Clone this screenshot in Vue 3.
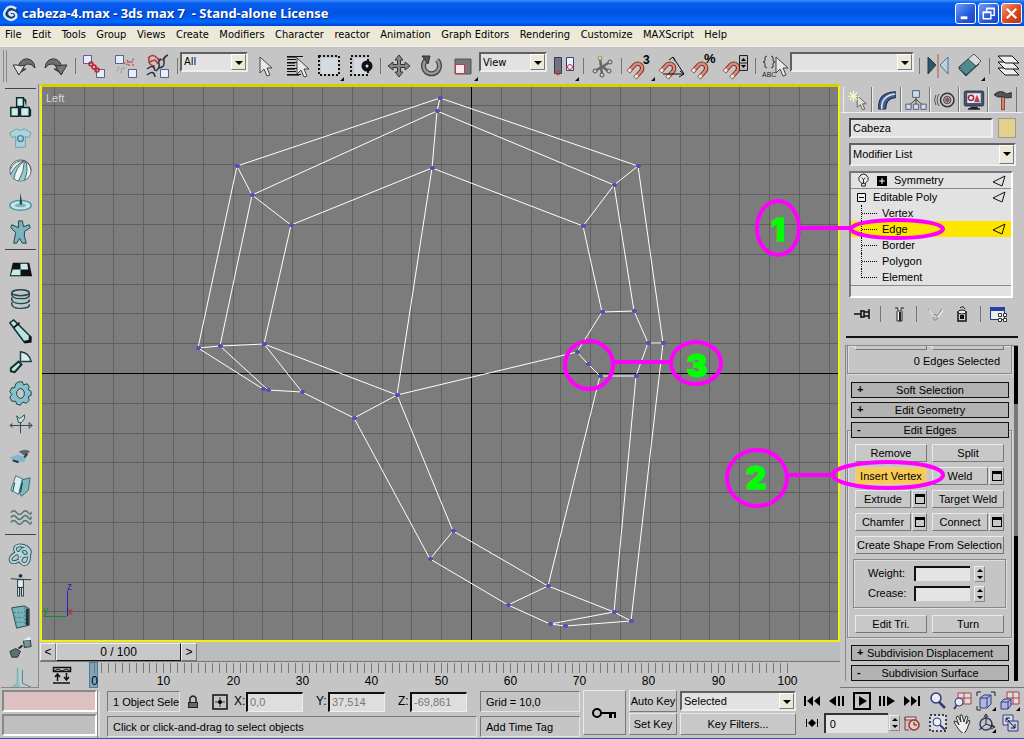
<script setup>
import { ref } from 'vue'

const menus = ['File', 'Edit', 'Tools', 'Group', 'Views', 'Create', 'Modifiers', 'Character', 'reactor', 'Animation', 'Graph Editors', 'Rendering', 'Customize', 'MAXScript', 'Help']

const magnet = '<g transform="rotate(42 13 19)"><path d="M8.500 27v-9a4.500 4.500 0 0 1 9 0v9" fill="none" stroke="#7d3a30" stroke-width="4.500"/><path d="M8.500 26.500V18a4.500 4.500 0 0 1 9 0v8.500" fill="none" stroke="#e08a7c" stroke-width="2.500"/><path d="M7 25h3M16 25h3" stroke="#eee" stroke-width="3"/></g>'
const corner = '<path d="M31 27v4h-4z" fill="#111"/>'
const cursor = 'M0 0v16l4-4 3 7 3-1-3-7h5z'

const art = {
  undo: '<path d="M10 24C9 13 14 8 20 9q6 1 7 9q-4-5-8-4-4 1-4 5l3 0z" fill="#6e6e6e" stroke="#333"/><path d="M5 15l6 10 6-10-4 1-4-1z" fill="#ddd" stroke="#333"/>',
  redo: '<g transform="translate(32 0) scale(-1 1)"><path d="M10 24C9 13 14 8 20 9q6 1 7 9q-4-5-8-4-4 1-4 5l3 0z" fill="#6e6e6e" stroke="#333"/><path d="M5 15l6 10 6-10-4 1-4-1z" fill="#777" stroke="#333"/></g>',
  link: '<g fill="#e9edf8" stroke="#59618c"><path d="M5.500 5.500h8v8h-8zM18.500 19.500h8v8h-8z"/></g><g fill="none" stroke="#c0202c" stroke-width="1.500"><circle cx="13" cy="14" r="2"/><circle cx="16" cy="17" r="2"/><circle cx="19" cy="20" r="2"/></g>',
  unlink: '<g fill="#e9edf8" stroke="#59618c"><path d="M5.500 5.500h8v8h-8zM18.500 19.500h8v8h-8z"/></g><g stroke="#cc5a60" stroke-width="1.500" stroke-dasharray="2 2"><path d="M14 14l4-4M17 12h8M16 15l9-7M18 15h7"/></g><path d="M9 17l-2 4M12 18l-1 5M14 17v3" stroke="#888" stroke-dasharray="2 1"/>',
  bind: '<g fill="none" stroke-width="1.500"><path d="M6 8q5-5 9 0t9-2M7 13q6-6 9 1M8 6q-4 9 5 10" stroke="#bd3039"/><path d="M26 5q-5 2-4 7t-5 6M5 19q7-6 8 2M5 25q7-6 8 2M19 9q-3 1-2 5t-3 7" stroke="#25334e"/></g><path d="M18.500 19.500h8v8h-8z" fill="#e9edf8" stroke="#59618c"/>',
  arrow: `<path transform="translate(11 7)" d="${cursor}" fill="#e8e8e8" stroke="#444"/>`,
  byname: `<path d="M6 6.500h16M6 9.500h9M6 12.500h12M6 15.500h8M6 18.500h12M6 21.500h9M6 24.500h14" stroke="#111" stroke-width="1"/><path d="M6 7.500h10M6 13.500h8M6 19.500h8M6 25.500h12" stroke="#555"/><path transform="translate(16 8)" d="${cursor}" fill="#e8e8e8" stroke="#444"/>`,
  rect: '<path d="M8 8h17v16H8z" fill="#d5d9e0"/><path d="M6 6h20v19H6z" fill="none" stroke="#111" stroke-width="2" stroke-dasharray="2 2"/>' + corner,
  window: '<path d="M9 8h13v16H9z" fill="#d5d9e4"/><path d="M6 6h17v19H6z" fill="none" stroke="#111" stroke-width="2" stroke-dasharray="2 2"/><circle cx="22" cy="16" r="5.500" fill="#111"/><circle cx="22" cy="16" r="1.500" fill="#ddd"/>',
  move: '<path d="M16 5l4 5h-2.500v4.500h4.500V12l5 4-5 4v-2.500h-4.500V22H20l-4 5-4-5h2.500v-4.500H10V20l-5-4 5-4v2.500h4.500V10H12z" fill="#888" stroke="#333"/>',
  rotate: '<path d="M11 10a8 8 0 1 0 11 0" fill="none" stroke="#444" stroke-width="5"/><path d="M11 10a8 8 0 1 0 11 0" fill="none" stroke="#999" stroke-width="2.500"/><path d="M7 6h8l-2 8z" fill="#555" stroke="#333"/>',
  scale: '<path d="M8 9h16v15H8z" fill="#777" stroke="#555"/><path d="M8.500 14.500h9v9h-9z" fill="#f3e9ec" stroke="#bd3b48"/>' + corner,
  pivot: '<path d="M6.500 7.500h7v16h-7z" fill="#71747c" stroke="#333b55"/><path d="M18.500 7.500h7v13h-7z" fill="#edf0ff" stroke="#3b437d"/><g fill="none" stroke="#d0353b"><circle cx="10" cy="23" r="2"/><circle cx="22" cy="17" r="2.500"/></g>' + corner,
  manip: '<path d="M14 8l2 17M9 21l15-9M16 16l6 5" stroke="#666" stroke-width="2.500"/><g fill="#ccc" stroke="#555"><circle cx="9" cy="21" r="2"/><circle cx="16" cy="25" r="2"/><circle cx="24" cy="12" r="2"/><circle cx="23" cy="21" r="2"/></g><circle cx="14" cy="8" r="2" fill="#eeea55" stroke="#888"/>',
  snap3: magnet + '<text x="19" y="14" font-size="12" font-weight="bold">3</text>' + corner,
  angle: magnet + '<path d="M17 7l11 17H7M17 7l-4 3M17 7l2 4M28 24l-4-3M28 24l-5 3" fill="none" stroke="#111"/>',
  percent: magnet + '<text x="16" y="13" font-size="13" font-weight="bold">%</text>',
  spin: magnet + '<path d="M19.500 5.500h8v15h-8zM19.500 13h8" fill="#bbb" stroke="#222"/><path d="M21 11l2.500-3 2.500 3zM21 15l2.500 3 2.500-3z"/>',
  named: `<g fill="none" stroke="#333"><path d="M9 6q-3 0-2 4 0 2-2 2 2 0 2 2-1 4 2 4M13 6q3 0 2 4 0 2 2 2-2 0-2 2 1 4-2 4"/></g><text x="4" y="27" font-size="7" fill="#222">ABC</text><path transform="translate(18 7)" d="${cursor}" fill="#e8e8e8" stroke="#444"/>`,
  mirror: '<path d="M6 7l8 8-8 9z" fill="#2d5964" stroke="#253d45"/><path d="M26 7l-8 8 8 9z" fill="#bdd0dd" stroke="#587080"/><path d="M16 4v24" stroke="#bd4d55"/>',
  align: '<path d="M5 17l9-8 8 7-10 9z" fill="#4d8b8e" stroke="#203f42"/><path d="M14 9l6-5 7 7-5 5z" fill="#d6dce3" stroke="#555"/><path d="M5 17v2l7 7v-2M12 26l13-12" fill="none" stroke="#26464b"/>' + corner,
  layers: '<g fill="#eee" stroke="#111"><path d="M6 18h14l7 7H13z"/><path d="M6 12h14l7 7H13z"/><path d="M6 6h14l7 7H13z"/></g>',

  cubes: '<g fill="#c7eef0" stroke="#142427" stroke-width="1.500"><path d="M12 5h7v9h-7zM6 15h8v9H6zM16 15h9v9h-9z"/></g><path d="M19 5l3 2v7M25 15l2 2v7h-2M14 15l2 1v8h-2" fill="#142427"/>',
  shirt: '<path d="M5 9l7-4q4 3 8 0l7 4-2 5-4-1v11H11V13l-4 1z" fill="#a9d4dd" stroke="#6ba0ae"/><circle cx="16" cy="15" r="3" fill="none" stroke="#4a8597" stroke-width="1.500"/>',
  ball: '<circle cx="16" cy="16" r="11" fill="#eef4f4" stroke="#5b6567"/><path d="M20 6Q10 10 6 20q0 2 3 5 2-12 11-19zM20 6q0 10-6 21l6-1q4-9 2-19z" fill="#8ecdd0"/><path d="M20 6Q10 5 5.500 15M20 6Q10 10 6 20M20 6q-9 7-11 19M20 6q0 10-6 21M21 6q4 9-1 20M21 6q6 5 6 10" fill="none" stroke="#4d6365"/>',
  drip: '<ellipse cx="16" cy="20" rx="11" ry="5" fill="#c5e7e9" stroke="#4f9aa0" stroke-width="1.500"/><ellipse cx="16" cy="20" rx="6" ry="2" fill="#7eb6ba"/><path d="M16 7l2 12h-3z" fill="#1d4b52"/>',
  man: '<path d="M14 4h4l1 6 6-2 1 3-6 4v5l2 7h-4l-3-5-3 5H9l2-11-5-5 1-3 7 3z" fill="#78b5be" stroke="#203f46"/>',
  checker: '<path d="M8 9h17l3 14H5z" fill="#111"/><path d="M16 10h7l1 6h-8zM8 16h8v6H6z" fill="#c4eded"/>',
  coil: '<g fill="none" stroke="#29454a" stroke-width="1.500"><ellipse cx="16" cy="8" rx="9" ry="3"/><path d="M7 8q-1 6 9 6t9-4M7 13q-1 6 9 6t9-4M7 18q-1 6 9 6t9-4M25 8v3q-1 3-7 3M25 15q0 4-7 4"/></g><path d="M9 12q6 2 14 0M9 17q6 2 14 0M9 22q6 2 14 0" stroke="#8ad0d3" fill="none"/>',
  tube: '<path d="M5 7l4-3 17 17-1 5-5 1z" fill="#b6e4e5" stroke="#142b2d" stroke-width="1.500"/><path d="M9 12l6-5" stroke="#111" stroke-width="2"/><path d="M20 27l6-1v-5" fill="none" stroke="#111" stroke-width="3"/>',
  hinge: '<path d="M6 22l8-7 3 3-7 8-4-1z" fill="#b6e4e5" stroke="#142b2d" stroke-width="2"/><path d="M16 15V5q9 1 11 10z" fill="#d6eeee" stroke="#243c40" stroke-width="1.500"/>',
  gear: '<path d="M14 4h4l1 3 4-1 2 3-1 3 3 2v4l-3 1 1 4-3 3-4-1-2 3-4-1-1-3-4 0-2-4 2-3-2-3 2-4 3 0 1-4z" fill="#85c1c9" stroke="#213c45"/><ellipse cx="16" cy="16" rx="4" ry="5" fill="#c6c6c6" stroke="#213c45"/>',
  vane: '<path d="M5 17h23M16 12v13M8 15l-3 2 3 2M25 14v6l3-3z" fill="none" stroke="#35474a"/><path d="M12 7l3 3 5-4v4l-3 4h-3z" fill="#cbe4e6" stroke="#35474a"/>',
  car: '<path d="M5 18l8-3 9 3-2 5-11-1z" fill="#83b8cc"/><path d="M14 12q7-4 12 0l-6 4z" fill="#5d676a"/><path d="M8 21l6 2M23 14l-3 4" stroke="#24353b" stroke-width="2"/>',
  book: '<path d="M11 5l7 3-4 16-8-4z" fill="#d1f1f2" stroke="#4a7478"/><path d="M18 9l8-2-2 13-7 6-2-3z" fill="#7fb8be" stroke="#3c686d"/><path d="M10 12l-2 9M18 12l-2 10" stroke="#152f33"/>',
  waves: '<g fill="none" stroke="#507276" stroke-width="1.500"><path d="M6 11q3-4 6 0t6 0 6 0 3-1M6 16q3-4 6 0t6 0 6 0 3-1M6 21q3-4 6 0t6 0 6 0 3-1"/></g>',
  knot: '<g fill="none" stroke="#375b63" stroke-width="4"><ellipse cx="18" cy="12" rx="8" ry="5" transform="rotate(20 18 12)"/><ellipse cx="12" cy="19" rx="7" ry="4" transform="rotate(-30 12 19)"/><ellipse cx="20" cy="18" rx="5" ry="8"/></g><g fill="none" stroke="#b5dadd" stroke-width="2"><ellipse cx="18" cy="12" rx="8" ry="5" transform="rotate(20 18 12)"/><ellipse cx="12" cy="19" rx="7" ry="4" transform="rotate(-30 12 19)"/><ellipse cx="20" cy="18" rx="5" ry="8"/></g>',
  figure: '<path d="M6 9q10 1 21 1M13 10h6v8h-6zM13 18h2v9h-2zM17 18h2v9h-2z" fill="#e4f0f0" stroke="#263a3d"/><circle cx="16" cy="6" r="2" fill="#263a3d"/>',
  cloth: '<path d="M7 7l13-2 5 3v17l-13 3z" fill="#78b2ba" stroke="#2d4d54"/><path d="M20 6l1 18M9 12h9M10 17h9M11 22h9" stroke="#456f77" stroke-dasharray="2 2"/><path d="M23 8v17" stroke="#1f3439" stroke-width="3"/>',
  dice: '<path d="M5 20l6-3 5 3-3 6-6 0z" fill="#617073" stroke="#2a3537"/><path d="M19 9l7-1 1 7-7 1z" fill="#74979a" stroke="#2a3537"/><path d="M14 17l4-3" stroke="#222" stroke-width="2"/><path d="M18 9l7-4 2 3z" fill="#e1f3f4"/>',
  pipe: '<path d="M13 5v16l-6 5M16 22l-7 5h14" fill="none" stroke="#83b7be" stroke-width="2"/><path d="M16 8v14l8 3" fill="none" stroke="#a9d4da" stroke-width="2"/><path d="M18 7v14l9 4" fill="none" stroke="#67777a"/>',

  create: `<path transform="translate(15 10)" d="${cursor}" fill="#e1e1d4" stroke="#444"/><path d="M10 4v15M2 11h16M5 6l10 10M15 6L5 16" stroke="#fff8c8" stroke-width="1.500"/>`,
  modify: '<path d="M5 28Q3 6 27 5v8Q15 13 14 28z" fill="#46618f" stroke="#1c2c50" stroke-width="1.500"/><path d="M9 28Q8 10 27 8" stroke="#dce6f2" stroke-width="2" fill="none"/>',
  hierarchy: '<path d="M16 12v11M16 15L7 23M16 15l9 8" stroke="#222"/><g fill="#d2daed" stroke="#333f58"><path d="M11.500 3.500h9v9h-9zM2.500 21.500h7v7h-7zM12.500 21.500h7v7h-7zM22.500 21.500h7v7h-7z"/></g>',
  motion: '<g fill="none" stroke="#333"><circle cx="19" cy="16" r="9" stroke-width="2"/><circle cx="19" cy="16" r="5"/><path d="M19 11v10M14 16h10M15 12l8 8M23 12l-8 8M8 8q-5 8 0 16M4 9q-4 7 0 14"/></g><circle cx="19" cy="16" r="2" fill="#b34"/>',
  display: '<rect x="3" y="4" width="26" height="20" rx="2" fill="#46546e" stroke="#17223b"/><path d="M7 7h18v13H7z" fill="#e6ecf5"/><circle cx="12" cy="13" r="3.500" fill="none" stroke="#b22539" stroke-width="2"/><path d="M16 19l4-10 4 10z" fill="#c43c51"/><path d="M11 26h10M8 28h16" stroke="#222" stroke-width="2"/>',
  utility: '<path d="M4 9q8-8 17-1l6-2v7h-8l-2-1H9z" fill="#555" stroke="#111"/><path d="M14 12h4v17h-4z" fill="#d98366" stroke="#6b3226"/>',

  pin: '<path d="M1 10h7M8 6v8M8 7h3v6H8M11 8h5v4h-5M16 5v10" fill="none" stroke="#111" stroke-width="1.500"/>',
  tubeEnd: '<path d="M6 4h3v3h3V4h3M8 7v10h5V7" fill="#eee" stroke="#222"/><path d="M11 8v9" stroke="#222" stroke-width="2"/>',
  unique: '<path d="M3 5l5 7 2-2 2 2 5-7M8 13h1v3h2M12 13v3" fill="none" stroke="#888"/><path d="M4 6l5 7M18 6l-5 7" stroke="#fff"/>',
  trash: '<path d="M6 8h8v9H6z" fill="#ccc" stroke="#111" stroke-width="1.500"/><ellipse cx="10" cy="8" rx="4" ry="2" fill="#eee" stroke="#111"/><path d="M8 11h4v4H8z" fill="#111"/><path d="M8 4q3-3 5 1" stroke="#111" fill="none"/>',
  sets: '<path d="M2.500 3.500h14v12h-14z" fill="#eee" stroke="#24356f"/><path d="M2 3h15v4H2z" fill="#2840ad"/><path d="M10.500 9.500h3v3h-3zM15.500 9.500h3v3h-3zM10.500 14.500h3v3h-3zM15.500 14.500h3v3h-3z" fill="#fff" stroke="#333"/>',

  start: '<path d="M2 5h2v10H2zM11 5v10L5 10zM18 5v10l-6-5z"/>',
  prev: '<path d="M9 5v10l-7-5zM11 5h2v10h-2zM15 5h2v10h-2z"/>',
  play: '<path d="M2 2h16v16H2z" fill="none" stroke="#000" stroke-width="2"/><path d="M7 5v10l8-5z"/>',
  next: '<path d="M2 5h2v10H2zM6 5h2v10H6zM10 5v10l8-5z"/>',
  end: '<path d="M2 5v10l6-5zM9 5v10l6-5zM16 5h2v10h-2z"/>',
  keymode: '<path d="M4 6h1v8H4zM10 6v8l-4-4zM10 6v8l4-4zM15 6h1v8h-1z"/>',
  timecfg: '<path d="M3 4h11v3H3z" fill="#ddd" stroke="#8b3a35"/><path d="M3 4v13h4" fill="none" stroke="#8b3a35"/><circle cx="12" cy="12" r="5" fill="#e9cac4" stroke="#9c352f" stroke-width="1.500"/><path d="M12 9v3h3" fill="none" stroke="#222"/>',
  zoom: '<circle cx="8" cy="7" r="5" fill="#e8edf5" stroke="#333c70" stroke-width="1.500"/><path d="M11 11l6 6" stroke="#333c70" stroke-width="2.500"/>',
  zoomall: '<path d="M6 2h13v11H6zM12 2v11M6 7h13" fill="#ddd" stroke="#ad3c4a"/><circle cx="7" cy="11" r="4" fill="#e8edf5" stroke="#333c70"/><path d="M5 14l-3 4" stroke="#333c70" stroke-width="2"/>',
  extents: '<path d="M4 7l4-3h7v9l-4 4H4zM4 7h7v9M11 7l4-3" fill="#aeb7e0" stroke="#303a83"/><path d="M1 5V1h4M15 1h4v4M1 15v4h4" fill="none" stroke="#222"/><path d="M20 16v4h-4z"/>',
  extall: '<path d="M7 1h12v12H7zM13 1v12M7 7h12" fill="#ddd" stroke="#ad3c4a"/><path d="M1 11l3-3h7v6l-3 4H1zM1 11h7v7M8 11l3-3" fill="#aeb7e0" stroke="#303a83"/><path d="M20 16v4h-4z"/>',
  region: '<path d="M2 2h16v16H2z" fill="#d8dce5" stroke="#111" stroke-width="1.500" stroke-dasharray="2 2"/><circle cx="9" cy="9" r="4" fill="#edf1fa" stroke="#333c70"/><path d="M12 12l5 5" stroke="#333c70" stroke-width="2"/>',
  pan: '<path d="M8 18L3 11l-1-3 3 1 2 3L4 4l2-1 3 6-1-7h2l2 7 2-6 2 1-2 7 3-4 1 1-3 8-3 5z" fill="#f0eeee" stroke="#333"/>',
  arc: '<circle cx="10" cy="11" r="6" fill="none" stroke="#303a70" stroke-width="1.500"/><path d="M10 2v9l8 3M10 11l-7 6M8 4l2-3 2 3M15 11l4 3-4 2" fill="none" stroke="#222"/><path d="M20 16v4h-4z"/>',
  maxvp: '<path d="M3 2h10v10H3z" fill="#d9def4" stroke="#303a83"/><path d="M8 8h10v10H8z" fill="#c8cce0" stroke="#303a83"/><path d="M6 5l9 10M6 5v4M6 5h4M15 15v-4M15 15h-4" fill="none" stroke="#111"/>',
}

const toolbar = [
  ['i', 'undo', 'Undo'], ['i', 'redo', 'Redo'], ['s'],
  ['i', 'link', 'Link'], ['i', 'unlink', 'Unlink'], ['i', 'bind', 'Bind to Space Warp'], ['s'],
  ['d', 'All', 'filter'],
  ['i', 'arrow', 'Select'], ['i', 'byname', 'Select by Name'], ['i', 'rect', 'Rectangular Region'], ['i', 'window', 'Window/Crossing'], ['s'],
  ['i', 'move', 'Move'], ['i', 'rotate', 'Rotate'], ['i', 'scale', 'Scale'],
  ['d', 'View', 'coords'],
  ['i', 'pivot', 'Pivot'], ['s'], ['i', 'manip', 'Manipulate'], ['s'],
  ['i', 'snap3', '3D Snap'], ['i', 'angle', 'Angle Snap'], ['i', 'percent', 'Percent Snap'], ['i', 'spin', 'Spinner Snap'], ['s'],
  ['i', 'named', 'Named Sets'], ['d', '', 'sets'], ['s'],
  ['i', 'mirror', 'Mirror'], ['i', 'align', 'Align'], ['s'], ['i', 'layers', 'Layers'],
]

const side = [
  ['cubes', 'shirt', 'ball', 'drip', 'man'],
  ['checker', 'coil', 'tube', 'hinge', 'gear', 'vane', 'car', 'book', 'waves'],
  ['knot', 'figure', 'cloth', 'dice', 'pipe'],
]
const tabs = ['create', 'modify', 'hierarchy', 'motion', 'display', 'utility']
const stackTools = ['pin', '', 'tubeEnd', '', 'unique', 'trash', '', 'sets']
const subs = ['Vertex', 'Edge', 'Border', 'Polygon', 'Element']

const step = 29.8
const gridX = Array.from({ length: 27 }, (_, k) => Math.round(471 + (k - 14) * step) + 0.5).filter(x => x !== 471.5)
const gridY = Array.from({ length: 18 }, (_, k) => Math.round(373 + (k - 9) * step) + 0.5).filter(y => y !== 373.5)

const v = {
  A: [440, 98], B: [437, 111], C: [432, 168], D: [237, 166], E: [252, 195], F: [291, 225],
  G: [638, 166], H: [614, 185], I: [583, 226], J: [602, 312], K: [634, 311], L: [648, 343], M: [663, 343],
  N: [577, 352], O: [588, 364], P: [600, 376], Q: [636, 376], R: [198, 348], S: [220, 346], T: [264, 344],
  U: [263, 389], V: [268, 390], W: [302, 392], X: [354, 418], Y: [397, 395], Z: [453, 531],
  a: [430, 559], b: [508, 605], c: [548, 586], d: [614, 612], e: [631, 621], f: [550, 624], g: [565, 626],
}
const edges = 'AD AG AB BE BH BC CF CI DE EF GH HI DR ES FT RS ST RU SV TW UV VW WX XY TY CY YN YZ Za Xa ab Zc bc cd bf fg ge de fd IJ JK HK KL LM GM JN NO OP PQ LQ Pc Qd Me'
const mesh = edges.split(' ').map(([p, q]) => `M${v[p]}L${v[q]}`).join('')
const verts = Object.values(v)

const ticks = Array.from({ length: 101 }, (_, i) => ({ i, x: Math.round(94 + i * 6.93) + 0.5 }))
const axes = [['X:', '0,0'], ['Y:', '37,514'], ['Z:', '-69,861']]
const objectName = ref('Cabeza')
const frame = ref('0')
</script>

<template>
  <div class="app">
    <header class="title">
      <svg class="logo" viewBox="0 0 18 18"><circle cx="9" cy="9" r="8" fill="#153f7c"/><path d="M15 4Q8-1 4 5t1 9q6 4 10-1 1-5-4-6-4 0-3 3 2 2 4 0" fill="none" stroke="#dcecf4" stroke-width="2.500"/></svg>
      <h1>cabeza-4.max - 3ds max 7 &nbsp;- Stand-alone License</h1>
      <button class="win" aria-label="Minimize"><svg viewBox="0 0 20 20"><path d="M5 13h7v3H5z" fill="#fff"/></svg></button>
      <button class="win" aria-label="Restore"><svg viewBox="0 0 20 20"><path d="M8 8V4.500h8V12h-3M8 5h8M4.500 8.500h8v7h-8zM4 9h9" fill="none" stroke="#fff" stroke-width="1.500"/></svg></button>
      <button class="win close" aria-label="Close"><svg viewBox="0 0 20 20"><path d="M5 5l10 10M15 5L5 15" stroke="#fff" stroke-width="2.500"/></svg></button>
    </header>

    <nav class="menu"><div><a v-for="m in menus" :key="m" href="#">{{ m }}</a></div></nav>

    <div class="toolbar">
      <i class="grip"></i>
      <template v-for="(t, n) in toolbar" :key="n">
        <button v-if="t[0] === 'i'" class="tool" :aria-label="t[2]"><svg viewBox="0 0 32 32" v-html="art[t[1]]"></svg></button>
        <i v-else-if="t[0] === 's'" class="tsep"></i>
        <span v-else class="drop" :class="t[2]"><select :aria-label="t[2]"><option>{{ t[1] }}</option></select><b></b></span>
      </template>
    </div>

    <main class="main">
      <aside class="side">
        <div v-for="(g, n) in side" :key="n" class="sgroup">
          <button v-for="s in g" :key="s" class="stool" :aria-label="s"><svg viewBox="0 0 32 32" v-html="art[s]"></svg></button>
        </div>
      </aside>

      <section class="center">
        <div class="viewport">
          <svg viewBox="42 87 796 553" preserveAspectRatio="xMidYMid slice">
            <g stroke="#606060">
              <path v-for="x in gridX" :key="'x' + x" :d="`M${x} 0V739`" />
              <path v-for="y in gridY" :key="'y' + y" :d="`M0 ${y}H1024`" />
            </g>
            <path d="M471.500 0V739M0 373.500H1024" stroke="#000" />
            <path :d="mesh" fill="none" stroke="#fff" />
            <path v-for="(p, n) in verts" :key="n" :d="`M${p[0] - 1} ${p[1] - 2}h3v1h1v2h-1v1h-3v-1h-1v-2h1z`" fill="#5450b4" />
            <text x="46" y="102" fill="#d5d5d5" font-size="11">Left</text>
            <g fill="none"><path d="M67.500 591v25" stroke="#2222c0"/><path d="M44 616.500h23" stroke="#158a30"/></g>
            <g font-size="10"><text x="67" y="590" fill="#2222c0">z</text><text x="43" y="614" fill="#158a30">y</text><text x="68" y="615" fill="#c02030">x</text></g>
          </svg>
        </div>
        <div class="slider">
          <button class="step">&lt;</button><button class="thumb">0 / 100</button><button class="step">&gt;</button>
        </div>
        <div class="track">
          <svg viewBox="40 662 800 26" preserveAspectRatio="xMinYMin meet">
            <path d="M53.500 667.500h17v4h-17zM53 683h17M57.500 675v6M66.500 673v6M55 677l2.500-3 2.500 3M64 677l2.500 3 2.500-3" fill="none" stroke="#111" stroke-width="1.500"/>
            <path d="M54 671l4-2 4 2 4-2 4 2" fill="none" stroke="#111"/>
            <rect x="89.500" y="662.500" width="8" height="25" fill="#7fa3bd" stroke="#527994"/>
            <template v-for="t in ticks" :key="t.i">
              <path :d="`M${t.x} 663v10`" stroke="#787878"/>
              <text v-if="t.i % 10 === 0" :x="t.x" y="685" font-size="12" text-anchor="middle">{{ t.i }}</text>
            </template>
          </svg>
        </div>
      </section>

      <aside class="panel">
        <div class="tabs"><button v-for="t in tabs" :key="t" :aria-label="t"><svg viewBox="0 0 32 32" v-html="art[t]"></svg></button></div>
        <div class="name"><input v-model="objectName" aria-label="Object name"><button class="swatch" aria-label="Object color"></button></div>
        <span class="drop modlist"><select aria-label="Modifier List"><option>Modifier List</option></select><b></b></span>
        <div class="stack">
          <div class="row top">
            <svg class="bulb" viewBox="0 0 14 16"><path d="M5 11q-4-3-3-6 2-4 5-4t5 4q1 3-3 6zM5 11v3h4v-3M5 5l2 2 2-2M7 7v4" fill="#eee" stroke="#111"/></svg>
            <svg class="plus" viewBox="0 0 9 9"><path d="M0 0h9v9H0z"/><path d="M2 4.500h5M4.500 2v5" stroke="#fff"/></svg>
            <span>Symmetry</span><svg class="tri" viewBox="0 0 14 12"><path d="M1 7l12-6-3 10z" fill="none" stroke="#111"/></svg>
          </div>
          <div class="row poly">
            <svg class="plus" viewBox="0 0 9 9"><path d="M.5.500h8v8h-8zM2 4.500h5" fill="#eee" stroke="#000"/></svg>
            <span>Editable Poly</span><svg class="tri" viewBox="0 0 14 12"><path d="M1 7l12-6-3 10z" fill="none" stroke="#111"/></svg>
          </div>
          <div v-for="s in subs" :key="s" class="row sub" :class="{ sel: s === 'Edge' }">
            <i></i><span>{{ s }}</span><svg v-if="s === 'Edge'" class="tri" viewBox="0 0 14 12"><path d="M1 7l12-6-3 10z" fill="none" stroke="#111"/></svg>
          </div>
          <div class="rest"></div>
        </div>
        <div class="stools">
          <template v-for="(s, n) in stackTools" :key="n"><button v-if="s" :aria-label="s"><svg viewBox="0 0 20 20" v-html="art[s]"></svg></button><i v-else></i></template>
        </div>
        <hr>
        <div class="scroll">
          <div class="rolls">
            <div class="box first">
              <div class="pair"><button class="btn" aria-label="Ring"></button><button class="btn" aria-label="Loop"></button></div>
              <p>0 Edges Selected</p>
            </div>
            <button class="roll"><b>+</b>Soft Selection</button>
            <button class="roll"><b>+</b>Edit Geometry</button>
            <button class="roll"><b>-</b>Edit Edges</button>
            <div class="box edges">
              <div class="pair"><button class="btn">Remove</button><button class="btn">Split</button></div>
              <div class="pair"><button class="btn hot">Insert Vertex</button><span class="duo"><button class="btn">Weld</button><button class="btn set" aria-label="Weld settings"><i></i></button></span></div>
              <div class="pair"><span class="duo"><button class="btn">Extrude</button><button class="btn set" aria-label="Extrude settings"><i></i></button></span><button class="btn">Target Weld</button></div>
              <div class="pair"><span class="duo"><button class="btn">Chamfer</button><button class="btn set" aria-label="Chamfer settings"><i></i></button></span><span class="duo"><button class="btn">Connect</button><button class="btn set" aria-label="Connect settings"><i></i></button></span></div>
              <button class="btn">Create Shape From Selection</button>
              <div class="box inner">
                <label>Weight:<input><span class="spin"></span></label>
                <label>Crease:<input><span class="spin"></span></label>
              </div>
              <div class="pair"><button class="btn">Edit Tri.</button><button class="btn">Turn</button></div>
            </div>
            <button class="roll"><b>+</b>Subdivision Displacement</button>
            <button class="roll"><b>-</b>Subdivision Surface</button>
          </div>
          <div class="bar"><i></i></div>
        </div>
      </aside>
    </main>

    <footer class="status">
      <div class="listen"><input class="pink" aria-label="Macro recorder"><input aria-label="Script listener"></div>
      <div class="mid">
        <div class="coords">
          <span class="sunk objs">1 Object Sele</span>
          <button class="mini" aria-label="Lock"><svg viewBox="0 0 14 16"><path d="M4 8V4q3-4 6 0v4" fill="none" stroke="#222" stroke-width="1.500"/><path d="M2 8h10v6H2z" fill="#222"/><path d="M3 10h8M3 12h8" stroke="#aaa"/></svg></button>
          <button class="mini abs" aria-label="Absolute mode"><svg viewBox="0 0 16 16"><path d="M1 1h14v14H1z" fill="none" stroke="#111" stroke-width="1.500"/><path d="M8 3v10M3 8h10" stroke="#333"/><circle cx="8" cy="8" r="2"/></svg></button>
          <label v-for="a in axes" :key="a[0]">{{ a[0] }}<input :value="a[1]"></label>
        </div>
        <div class="sunk">Click or click-and-drag to select objects</div>
      </div>
      <div class="tags"><div class="sunk">Grid = 10,0</div><div class="sunk">Add Time Tag</div></div>
      <button class="btn key" aria-label="Set keys"><svg viewBox="0 0 28 14"><circle cx="6" cy="7" r="4" fill="none" stroke="#000" stroke-width="2"/><path d="M10 6h15v6h-2V8h-2v4h-3V8h-8z"/></svg></button>
      <div class="keys"><button class="btn">Auto Key</button><button class="btn">Set Key</button></div>
      <div class="filters"><span class="drop"><select aria-label="Key set"><option>Selected</option></select><b></b></span><button class="btn">Key Filters...</button></div>
      <div class="play">
        <div><button v-for="p in ['start', 'prev', 'play', 'next', 'end']" :key="p" :aria-label="p"><svg viewBox="0 0 20 20" v-html="art[p]"></svg></button></div>
        <div><button aria-label="Key mode"><svg viewBox="0 0 20 20" v-html="art.keymode"></svg></button><input v-model="frame" aria-label="Current frame"><span class="spin"></span><button aria-label="Time configuration"><svg viewBox="0 0 20 20" v-html="art.timecfg"></svg></button></div>
      </div>
      <div class="views"><button v-for="p in ['zoom', 'zoomall', 'extents', 'extall', 'region', 'pan', 'arc', 'maxvp']" :key="p" :aria-label="p"><svg viewBox="0 0 20 20" v-html="art[p]"></svg></button></div>
    </footer>

    <svg class="notes" viewBox="0 0 1024 739">
      <g fill="none" stroke="#f0f" stroke-width="4">
        <ellipse cx="778" cy="228" rx="21" ry="27"/><path d="M799 228h52"/><ellipse cx="897" cy="229" rx="46" ry="9"/>
        <ellipse cx="757" cy="478" rx="30" ry="28"/><path d="M787 475h46"/><ellipse cx="888" cy="475" rx="55" ry="13"/>
        <circle cx="589" cy="365" r="24"/><path d="M613 362h58"/><ellipse cx="696" cy="363" rx="25" ry="21"/>
      </g>
      <g class="digits"><text x="778" y="241">1</text><text x="756" y="489">2</text><text x="697" y="377">3</text></g>
    </svg>
  </div>
</template>

<style>
html, body { margin: 0; }
</style>

<style scoped>
* { box-sizing: border-box; }
.app { position: relative; min-height: 100vh; display: flex; flex-direction: column; background: #c5c5c5; color: #000; font: 11px/13px "Liberation Sans", Arial, sans-serif; overflow: hidden; }
button, input, select { font: inherit; color: inherit; margin: 0; padding: 0; border: 0; border-radius: 0; background: none; min-width: 0; }
svg { display: block; }
h1, p { margin: 0; font: inherit; }

.title { height: 26px; display: flex; align-items: center; gap: 2px; padding: 0 2px; color: #fff; background: linear-gradient(#3a92ff, #0a5cf0 12%, #0054e3 50%, #0066ff 85%, #0040c8); }
.title h1 { flex: 1; padding-left: 1px; font: bold 13px/20px "Noto Sans", sans-serif; text-shadow: 1px 1px #0a2a80; white-space: nowrap; }
.logo { width: 17px; height: 17px; }
.win { width: 21px; height: 21px; border: 1px solid #fff; border-radius: 3px; background: linear-gradient(135deg, #6f9dfa, #2458d8 60%, #1b49c0); }
.close { background: linear-gradient(135deg, #f09a7a, #dd4b22 50%, #b8350f); }

.menu { height: 20px; padding: 2px 5px 0; background: #ece9d8; font-family: "DejaVu Sans Condensed", "DejaVu Sans", sans-serif; white-space: nowrap; }
.menu div { display: flex; justify-content: space-between; max-width: 722px; }
.menu a { color: #000; text-decoration: none; }

.toolbar { height: 38px; display: flex; align-items: center; border-top: 1px solid #eee; }
.grip { width: 4px; height: 32px; margin: 0 1px 0 3px; border: solid #888; border-width: 0 1px; }
.tool { flex: none; width: 32px; height: 32px; }
.tsep { flex: none; width: 6px; height: 16px; background: linear-gradient(#777, #777) no-repeat 3px 0 / 1px 100%; }
.drop { position: relative; display: block; height: 20px; border: 2px solid; border-color: #606060 #eee #eee #606060; background: #e2e2e2; }
.toolbar .drop { width: 68px; margin: -8px 1px 0 0; font-family: "DejaVu Sans Condensed", sans-serif; }
.toolbar .drop.sets { flex: 1; margin-right: 2px; }
.drop select { appearance: none; width: 100%; height: 100%; padding: 0 18px 0 2px; display: block; }
.drop b { position: absolute; right: 0; top: 0; bottom: 0; width: 15px; background: #ece9d8; border: 1px solid; border-color: #fff #777 #777 #fff; pointer-events: none; }
.drop b::after { content: ""; position: absolute; left: 3px; top: 6px; border: 4px solid transparent; border-top-color: #000; border-bottom: 0; }

.main { flex: 1; display: grid; grid-template-columns: 40px minmax(0, 1fr) 184px; min-height: 604px; }
.side { margin: 0 1px; border: solid #888; border-width: 0 1px 1px 0; padding: 4px 0 0 2px; height: 604px; overflow: hidden; }
.sgroup { border-top: 1px solid #444; margin: 0 2px 1px 2px; display: flex; flex-direction: column; padding-top: 4px; }
.stool { flex: none; height: 31px; display: grid; place-items: center; }
.stool svg { width: 31px; height: 31px; }

.center { display: flex; flex-direction: column; min-width: 0; }
.viewport { flex: 1; min-height: 0; border: 2px solid #f0ef10; border-top: 3px solid #d8d000; background: #7c7c7c; position: relative; }
.viewport svg { position: absolute; inset: 0; width: 100%; height: 100%; }
.slider { height: 20px; display: flex; background: #b9bcbe; border: solid #777; border-width: 0 0 1px; padding-top: 1px; }
.step, .thumb { background: #c8c8c8; border: 1px solid; border-color: #eee #777 #777 #eee; }
.step { width: 16px; font-size: 12px; }
.thumb { width: 125px; border-color: #eee #111 #111 #eee; font-size: 12px; }
.track { height: 26px; }
.track svg { width: 100%; height: 26px; }

.panel { padding: 3px 6px 0 3px; display: flex; flex-direction: column; border-bottom: 1px solid #777; }
.tabs { display: flex; border-bottom: 1px solid #eee; margin: 0 -5px 0 -2px; padding-left: 2px; }
.tabs button { width: 29px; height: 25px; border-right: 1px solid #777; border-left: 1px solid #eee; }
.tabs svg { width: 24px; height: 24px; margin: auto; }
.name { display: flex; gap: 5px; margin: 5px 0 0 6px; width: 167px; }
.name input { flex: 1; height: 20px; padding: 0 2px; background: #e2e2e2; border: 2px solid; border-color: #444 #eee #eee #444; }
.swatch { width: 18px; height: 20px; background: #e2d08b; border: 1px solid #999; }
.modlist { height: 23px; margin: 5px 0 0 6px; width: 167px; }
.stack { margin: 5px 0 0 6px; width: 164px; border: 2px solid; border-color: #777 #fff #fff #777; background: #e2e2e2; display: flex; flex-direction: column; height: 127px; }
.row { height: 16px; flex: none; display: flex; align-items: center; }
.top { border-bottom: 1px solid #888; padding-left: 6px; }
.bulb { width: 13px; height: 15px; margin-right: 7px; }
.plus { width: 9px; height: 9px; margin-right: 7px; }
.top .plus { width: 10px; height: 10px; }
.poly { padding-left: 6px; }
.row span { flex: 1; }
.tri { width: 14px; height: 12px; margin-right: 5px; }
.sub i { width: 17px; height: 16px; margin: 0 4px 0 10px; border-left: 1px dotted #000; background: repeating-linear-gradient(90deg, #000 0 1px, transparent 1px 2px) no-repeat 0 8px / 100% 1px; }
.sub:nth-last-child(2) i { height: 9px; align-self: flex-start; }
.sel { background: #ffe600; }
.rest { flex: 1; border-top: 1px solid #888; }
.stools { height: 32px; display: flex; align-items: center; justify-content: space-between; padding: 0 10px; }
.stools button { width: 20px; height: 20px; }
.stools i { height: 16px; border-left: 1px solid #777; }
.panel hr { width: 172px; margin: 6px 0 7px 3px; border: 0; border-top: 2px solid #111; flex: none; }
.scroll { flex: 1 1 0; min-height: 0; margin: 0 0 6px 2px; display: grid; grid-template-columns: minmax(0, 1fr) 4px; overflow: hidden; border: solid #888; border-width: 1px 0 0 1px; }
.rolls { overflow: hidden; padding: 0 2px 0 1px; }
.bar { background: #000; padding-top: 58px; }
.bar i { display: block; height: 132px; background: #777; }
.box { border: 1px solid #888; box-shadow: inset 1px 1px #ddd, 1px 1px #ddd; }
.btn { height: 18px; background: #c8c8c8; border: 1px solid; border-color: #eaeaea #777 #777 #eaeaea; white-space: nowrap; text-align: center; }
.pair { display: grid; grid-template-columns: 1fr 1fr; gap: 5px; }
.duo { display: grid; grid-template-columns: 1fr 15px; gap: 1px; }
.set i { display: block; width: 10px; height: 10px; margin: auto; border: 1px solid #000; border-top-width: 3px; }
.hot { background: #f7cb53; border-color: #dca; }
.first { border-top: 0; height: 28px; padding: 0 7px; }
.first .btn { height: 4px; border-top: 0; }
.first p { text-align: right; padding: 5px 4px 0 0; }
.roll { position: relative; z-index: 1; display: block; width: calc(100% - 7px); height: 16px; margin: 0 3px 4px 4px; border: 1px solid #111; background: #b2b2b2; }
.first + .roll { margin-top: 8px; }
.roll b { position: absolute; left: 5px; top: 0; }
.edges { margin-top: -12px; padding: 13px 7px 0; display: flex; flex-direction: column; gap: 5px; height: 208px; }
.edges + .roll { margin-top: 7px; }
.inner { height: 49px; margin: 0 -2px 2px; padding: 6px 20px 0 14px; display: grid; gap: 5px; align-content: start; }
.inner label { display: flex; align-items: center; height: 15px; }
.inner input { width: 56px; height: 15px; margin: 0 4px 0 auto; border: solid #111; border-width: 2px 0 0 2px; background: #e4e4e4; }
.spin { position: relative; width: 11px; height: 16px; background: #ccc; border: 1px solid; border-color: #eee #888 #888 #eee; flex: none; }
.spin::before, .spin::after { content: ""; position: absolute; left: 2px; border: 3px solid transparent; }
.spin::before { top: 2px; border-top: 0; border-bottom-color: #000; }
.spin::after { bottom: 2px; border-bottom: 0; border-top-color: #000; }

.status { height: 51px; display: flex; gap: 3px; border-bottom: 1px solid #2a52d0; padding: 2px 2px 0 2px; }
.listen { width: 96px; display: grid; gap: 2px; align-content: start; border-right: 1px solid #888; box-shadow: 4px 0 0 -2px #ddd; }
.listen input { height: 22px; background: #bfbfbf; border: 2px solid; border-color: #888 #fff #fff #888; }
.listen .pink { background: #dcc0c2; }
.mid { flex: 1; margin-left: 6px; min-width: 0; }
.mid, .tags { display: flex; flex-direction: column; gap: 4px; }
.sunk { height: 21px; padding: 4px 5px 0; border: 1px solid; border-color: #777 #e4e4e4 #e4e4e4 #777; white-space: nowrap; overflow: hidden; }
.coords { display: flex; align-items: center; padding-top: 1px; }
.objs { width: 73px; padding-right: 0; }
.mini { width: 14px; margin-left: 6px; }
.abs { width: 16px; margin-left: 12px; margin-right: 6px; }
.coords label { display: flex; align-items: center; font-size: 12px; width: 69px; margin-right: 13px; justify-content: space-between; }
.coords label:last-child { margin-right: 0; }
.coords input { width: 57px; height: 20px; padding-left: 2px; font-size: 11px; border: 1px solid #eee; border-top: 2px solid #111; border-left: 2px solid #111; background: #dedede; color: #777; }
.tags { width: 100px; padding-top: 1px; }
.key { width: 43px; height: 45px; }
.key svg { width: 28px; height: 14px; margin: auto; }
.keys { width: 48px; display: grid; gap: 1px; align-content: start; }
.keys .btn, .filters .btn { height: 22px; width: 100%; }
.filters { width: 116px; padding-top: 1px; }
.filters .drop { height: 20px; margin-bottom: 2px; }
.play { width: 124px; padding: 0 1px 0 3px; }
.play > div { display: flex; align-items: center; height: 22px; justify-content: space-between; }
.play button { width: 20px; height: 20px; flex: none; }
.play input { width: 64px; height: 20px; padding-left: 4px; border: solid #333; border-width: 2px 0 0 2px; background: #e2e2e2; }
.play svg { width: 20px; height: 20px; }
.views { width: 96px; display: grid; grid-template-columns: repeat(4, 1fr); grid-auto-rows: 22px; place-items: center; }
.views button, .views svg { width: 20px; height: 20px; }

.notes { position: absolute; top: 0; right: 0; width: 1024px; height: 739px; pointer-events: none; z-index: 5; }
.digits { fill: #0f0; font: 900 32px "Inter", "DejaVu Sans", sans-serif; text-anchor: middle; stroke: #0f0; stroke-width: 1; }
</style>
